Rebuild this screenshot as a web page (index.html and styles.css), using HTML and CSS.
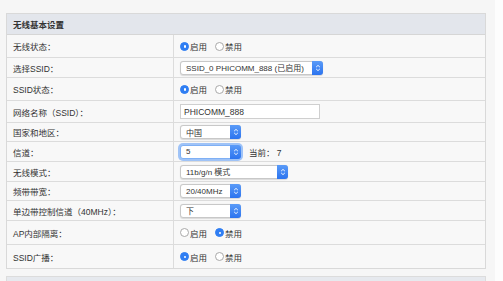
FILE: index.html
```html
<!DOCTYPE html>
<html lang="zh">
<head>
<meta charset="utf-8">
<link rel="stylesheet" href="styles.css">
</head>
<body>
<div class="page">
  <div class="panel">
    <div class="head">无线基本设置</div>
    <div class="row r-radio">
      <div class="label">无线状态：</div>
      <div class="value">
        <span class="radio on"></span><span class="rt">启用</span>
        <span class="radio"></span><span class="rt">禁用</span>
      </div>
    </div>
    <div class="row r-sel">
      <div class="label">选择SSID：</div>
      <div class="value">
        <div class="select w-ssid"><span class="st">SSID_0 PHICOMM_888 (已启用)</span><span class="btn"><svg viewBox="0 0 8 10" width="6" height="8"><path d="M1.5 3.8 L4 1.5 L6.5 3.8 M1.5 6.2 L4 8.5 L6.5 6.2" fill="none" stroke="#fff" stroke-width="1.2"/></svg></span></div>
      </div>
    </div>
    <div class="row r-radio">
      <div class="label">SSID状态：</div>
      <div class="value">
        <span class="radio on"></span><span class="rt">启用</span>
        <span class="radio"></span><span class="rt">禁用</span>
      </div>
    </div>
    <div class="row r-input">
      <div class="label">网络名称（SSID）：</div>
      <div class="value">
        <div class="input">PHICOMM_888</div>
      </div>
    </div>
    <div class="row r-sel2">
      <div class="label">国家和地区：</div>
      <div class="value">
        <div class="select w-small"><span class="st">中国</span><span class="btn"><svg viewBox="0 0 8 10" width="6" height="8"><path d="M1.5 3.8 L4 1.5 L6.5 3.8 M1.5 6.2 L4 8.5 L6.5 6.2" fill="none" stroke="#fff" stroke-width="1.2"/></svg></span></div>
      </div>
    </div>
    <div class="row r-sel">
      <div class="label">信道：</div>
      <div class="value">
        <div class="select w-small focus"><span class="st">5</span><span class="btn"><svg viewBox="0 0 8 10" width="6" height="8"><path d="M1.5 3.8 L4 1.5 L6.5 3.8 M1.5 6.2 L4 8.5 L6.5 6.2" fill="none" stroke="#fff" stroke-width="1.2"/></svg></span></div>
        <span class="cur">当前：&nbsp;7</span>
      </div>
    </div>
    <div class="row r-sel">
      <div class="label">无线模式：</div>
      <div class="value">
        <div class="select w-mode"><span class="st">11b/g/n 模式</span><span class="btn"><svg viewBox="0 0 8 10" width="6" height="8"><path d="M1.5 3.8 L4 1.5 L6.5 3.8 M1.5 6.2 L4 8.5 L6.5 6.2" fill="none" stroke="#fff" stroke-width="1.2"/></svg></span></div>
      </div>
    </div>
    <div class="row r-sel2">
      <div class="label">频带带宽：</div>
      <div class="value">
        <div class="select w-small"><span class="st">20/40MHz</span><span class="btn"><svg viewBox="0 0 8 10" width="6" height="8"><path d="M1.5 3.8 L4 1.5 L6.5 3.8 M1.5 6.2 L4 8.5 L6.5 6.2" fill="none" stroke="#fff" stroke-width="1.2"/></svg></span></div>
      </div>
    </div>
    <div class="row r-sel">
      <div class="label">单边带控制信道（40MHz）：</div>
      <div class="value">
        <div class="select w-small"><span class="st">下</span><span class="btn"><svg viewBox="0 0 8 10" width="6" height="8"><path d="M1.5 3.8 L4 1.5 L6.5 3.8 M1.5 6.2 L4 8.5 L6.5 6.2" fill="none" stroke="#fff" stroke-width="1.2"/></svg></span></div>
      </div>
    </div>
    <div class="row r-radio2">
      <div class="label">AP内部隔离：</div>
      <div class="value">
        <span class="radio"></span><span class="rt">启用</span>
        <span class="radio on"></span><span class="rt">禁用</span>
      </div>
    </div>
    <div class="row r-radio2">
      <div class="label">SSID广播：</div>
      <div class="value">
        <span class="radio on"></span><span class="rt">启用</span>
        <span class="radio"></span><span class="rt">禁用</span>
      </div>
    </div>
  </div>
  <div class="panel2"></div>
</div>
</body>
</html>
```
FILE: styles.css
```css
html, body {
  margin: 0;
  padding: 0;
  background: #fdfdfd;
}
body {
  font-family: "Liberation Sans", "Noto Sans CJK SC", sans-serif;
  font-size: 8.5px;
  color: #333;
}
.page {
  width: 495px;
  height: 281px;
  background: #f6f6f6;
  padding: 13px 0 0 6px;
  box-sizing: border-box;
  overflow: hidden;
}
.panel {
  width: 480px;
  border: 1px solid #d9d9d9;
  background: #f8f8f8;
  box-sizing: border-box;
}
.head {
  height: 20px;
  background: #e3e6ec;
  font-weight: bold;
  font-size: 8.5px;
  display: flex;
  align-items: center;
  padding-left: 6px;
  border-bottom: 1px solid #d6d6d6;
}
.row {
  display: flex;
  border-bottom: 1px solid #dcdcdc;
}
.row:last-child { border-bottom: none; }
.r-radio { height: 22px; }
.r-radio2 { height: 23px; }
.r-sel { height: 19px; }
.r-sel2 { height: 18px; }
.r-input { height: 21px; }
.label {
  width: 167px;
  flex: none;
  border-right: 1px solid #dcdcdc;
  display: flex;
  align-items: center;
  padding-left: 6px;
  box-sizing: border-box;
  white-space: nowrap;
}
.value {
  flex: 1;
  display: flex;
  align-items: center;
  padding-left: 6px;
}
.radio {
  width: 9px;
  height: 9px;
  border-radius: 50%;
  border: 1px solid #a9a9a9;
  background: #fff;
  box-sizing: border-box;
  flex: none;
  position: relative;
}
.radio.on {
  background: #2f7ef3;
  border-color: #2f7ef3;
}
.radio.on::after {
  content: "";
  position: absolute;
  left: 2.5px;
  top: 2.5px;
  width: 2.5px;
  height: 2.5px;
  border-radius: 50%;
  background: #fff;
}
.rt {
  margin: 0 8px 0 1px;
}
.select {
  height: 14px;
  background: #fff;
  border: 1px solid #c8c8c8;
  border-radius: 3px;
  box-sizing: border-box;
  display: flex;
  align-items: center;
  justify-content: space-between;
  box-shadow: 0 0.5px 1px rgba(0,0,0,0.12);
}
.select .st {
  padding-left: 5px;
  white-space: nowrap;
  font-size: 8px;
}
.select .btn {
  width: 11px;
  height: 14px;
  margin: -1px -1px -1px 0;
  background: linear-gradient(#5a9bf8, #2c74ef);
  border-radius: 0 3px 3px 0;
  display: flex;
  align-items: center;
  justify-content: center;
}
.w-ssid { width: 143px; }
.w-small { width: 61px; }
.w-mode { width: 108px; }
.select.focus {
  box-shadow: 0 0 0 2px #9fc3f7;
  border-color: #7fb0f5;
}
.cur {
  margin-left: 8px;
}
.input {
  width: 140px;
  height: 15px;
  background: #fff;
  border: 1px solid #cfcfcf;
  box-sizing: border-box;
  display: flex;
  align-items: center;
  padding-left: 3px;
  font-size: 8.5px;
}
.panel2 {
  margin-top: 7px;
  width: 480px;
  height: 20px;
  background: #e6e9ee;
  border: 1px solid #dcdcdc;
  box-sizing: border-box;
}
```
